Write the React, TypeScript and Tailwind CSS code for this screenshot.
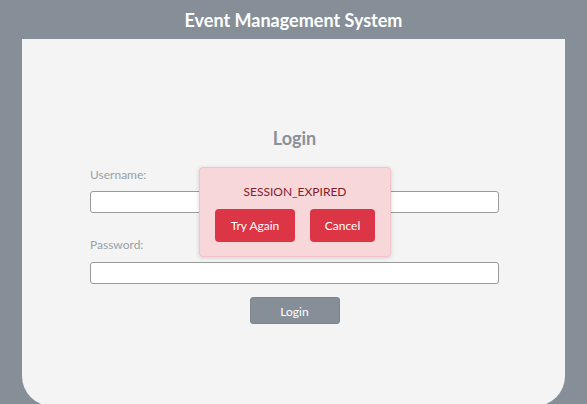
import React from 'react';

const App: React.FC = () => {
  return (
    <div className="h-[404px] overflow-hidden bg-[#868f98] flex flex-col font-['Lato',sans-serif]">
      <header className="h-[39px] shrink-0 flex items-center justify-center">
        <h1 className="text-[18px] font-bold text-white leading-none">Event Management System</h1>
      </header>

      <main className="relative mx-[22px] h-[367px] shrink-0 bg-[#f4f4f4] rounded-b-[30px]">
        <div className="pt-[87px] pl-[68px] pr-[66px] flex flex-col">
          <h2 className="text-center text-[18px] leading-[24px] font-bold text-[#8a9198]">Login</h2>

          <label className="mt-[17px] text-[12px] leading-[16px] text-[#9aa0a6]">Username:</label>
          <input
            type="text"
            className="mt-[8px] h-[22px] w-full bg-white border border-[#9a9a9a] rounded-[3px] outline-none"
          />

          <label className="mt-[24px] text-[12px] leading-[16px] text-[#9aa0a6]">Password:</label>
          <input
            type="password"
            className="mt-[9px] h-[22px] w-full bg-white border border-[#9a9a9a] rounded-[3px] outline-none"
          />

          <button className="mt-[13px] self-center w-[90px] h-[27px] pt-[2px] rounded-[3px] bg-[#868f98] border border-[#7c848c] text-white text-[12px]">
            Login
          </button>
        </div>

        {/* session expired popup */}
        <div className="absolute left-[177px] top-[128px] w-[192px] h-[90px] bg-[#f8d7da] border border-[#f5c2c7] rounded-[4px] shadow-[0_1px_4px_rgba(0,0,0,0.15)] pt-[16px] px-[15px] flex flex-col items-center">
          <p className="text-[12px] leading-[16px] text-[#842029]">SESSION_EXPIRED</p>
          <div className="mt-[9px] w-full flex justify-between">
            <button className="w-[80px] h-[33px] rounded-[4px] bg-[#dc3545] text-white text-[12px]">Try Again</button>
            <button className="w-[65px] h-[33px] rounded-[4px] bg-[#dc3545] text-white text-[12px]">Cancel</button>
          </div>
        </div>
      </main>
    </div>
  );
};

export default App;
